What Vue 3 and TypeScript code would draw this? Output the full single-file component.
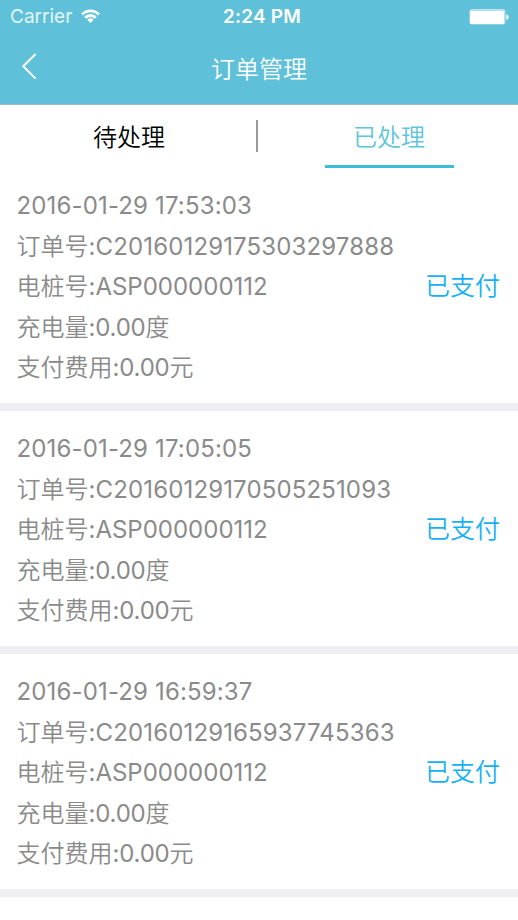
<script setup lang="ts">
interface Order {
  time: string
  orderNo: string
  pileNo: string
  energy: string
  fee: string
  status: string
}

const orders: Order[] = [
  { time: '2016-01-29 17:53:03', orderNo: 'C20160129175303297888', pileNo: 'ASP000000112', energy: '0.00', fee: '0.00', status: '已支付' },
  { time: '2016-01-29 17:05:05', orderNo: 'C20160129170505251093', pileNo: 'ASP000000112', energy: '0.00', fee: '0.00', status: '已支付' },
  { time: '2016-01-29 16:59:37', orderNo: 'C20160129165937745363', pileNo: 'ASP000000112', energy: '0.00', fee: '0.00', status: '已支付' },
]
</script>

<template>
  <div class="screen">
    <header class="top">
      <div class="status-bar">
        <div class="carrier">
          <span>Carrier</span>
          <svg class="wifi" viewBox="0 0 22 16" width="21" height="16">
            <path d="M1.2 5.2a14 14 0 0 1 19.6 0l-2 2.2a11 11 0 0 0-15.6 0z" />
            <path d="M4.4 8.6a9.4 9.4 0 0 1 13.2 0l-2.1 2.2a6.4 6.4 0 0 0-9 0z" />
            <path d="M7.7 12a4.8 4.8 0 0 1 6.6 0L11 15.4z" />
          </svg>
        </div>
        <span class="clock">2:24 PM</span>
        <svg class="battery" viewBox="0 0 40 16" width="40" height="16">
          <rect class="shell" x="0.5" y="0" width="36" height="15.5" rx="2.5" />
          <rect x="1" y="2" width="34" height="13" rx="1" />
          <path d="M37.4 5.2a3 3 0 0 1 0 5.8z" />
        </svg>
      </div>
      <div class="nav">
        <svg class="back" viewBox="0 0 16 28" width="16" height="28">
          <path d="M14.6 2 2.2 14.3l12.4 12.3" />
        </svg>
        <h1>订单管理</h1>
      </div>
    </header>
    <nav class="tabs">
      <div class="tab"><span>待处理</span></div>
      <i class="divider"></i>
      <div class="tab active"><span>已处理</span></div>
    </nav>
    <main>
      <section v-for="o in orders" :key="o.orderNo" class="order">
        <div class="details">
          <p><b class="time">{{ o.time }}</b></p>
          <p>订单号<b class="number">:{{ o.orderNo }}</b></p>
          <p>电桩号<b>:{{ o.pileNo }}</b></p>
          <p>充电量<b class="amount">:{{ o.energy }}</b>度</p>
          <p>支付费用<b class="amount">:{{ o.fee }}</b>元</p>
        </div>
        <span class="state">{{ o.status }}</span>
      </section>
    </main>
  </div>
</template>

<style>
body { background: #fff; }
</style>

<style scoped>
.screen { width: 518px; height: 920px; overflow: hidden; background: #fff; font-family: Inter, "Noto Sans CJK SC", sans-serif; }
.top { height: 105px; background: #5fc1d9; border-bottom: 1px solid #a9b6b9; color: #fff; box-sizing: border-box; }
.status-bar { height: 33px; display: grid; grid-template-columns: 1fr auto 1fr; align-items: center; padding: 0 9px 0 10px; font-size: 19px; }
.carrier { display: flex; align-items: center; gap: 8px; color: #e4f5f9; }
.wifi, .battery { fill: #fff; }
.wifi { margin-bottom: 2px; }
.battery { justify-self: end; }
.battery .shell { fill: #b5e2ed; }
.clock { font-weight: 600; padding-left: 5px; letter-spacing: 0.2px; }
.nav { height: 70px; display: grid; grid-template-columns: 60px 1fr 60px; align-items: center; }
.back { margin: 0 0 5px 21px; fill: none; stroke: #fff; stroke-width: 2; }
h1 { margin: 0 0 1px; text-align: center; font-size: 24px; font-weight: 350; }
.tabs { height: 64px; display: flex; align-items: flex-start; }
.tab { flex: 1; height: 64px; display: flex; justify-content: center; font-size: 24px; font-weight: 350; line-height: 65px; color: #000; }
.tab.active span { width: 129px; height: 60px; text-align: center; border-bottom: 3px solid #3dbbdb; color: #5fc4dd; }
.divider { width: 2px; height: 32px; margin: 15px 2px 0 -4px; background: #999; }
.tab:first-child { padding-right: 1px; margin-right: 1px; }
.order { height: 243px; box-sizing: border-box; padding: 18px 18px 0 16.5px; border-bottom: 8px solid #eeeef3; display: flex; justify-content: space-between; }
.order:first-child { height: 242px; padding-top: 17px; }
p { margin: 0; font-size: 24px; line-height: 40.5px; color: #8a8a8a; font-weight: 350; white-space: nowrap; }
p b { font-weight: 400; }
.time { letter-spacing: 0.15px; }
.number { letter-spacing: 0.14px; }
.amount { letter-spacing: -0.2px; }
.state { font-size: 25px; font-weight: 350; line-height: 40px; margin-top: 80px; color: #17b0f6; }
</style>
